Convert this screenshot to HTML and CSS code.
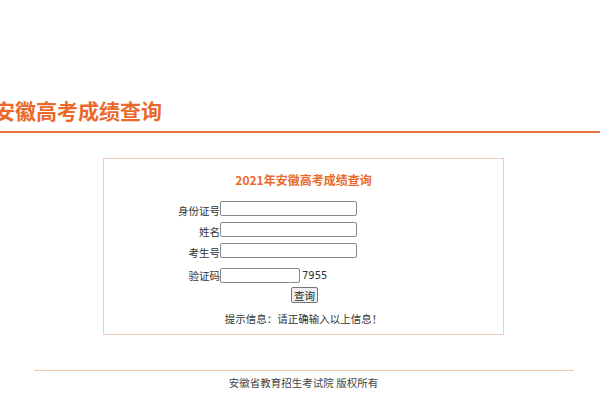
FILE: index.html
```html
<!DOCTYPE html>
<html lang="zh-CN">
<head>
<meta charset="utf-8">
<title>安徽高考成绩查询</title>
<link rel="stylesheet" href="styles.css">
</head>
<body>
<div class="header">
  <h1 class="site-title">安徽高考成绩查询</h1>
</div>
<div class="wrap">
  <div class="query-box">
    <h2 class="query-title">2021年安徽高考成绩查询</h2>
    <div class="form">
      <label class="lbl">身份证号</label>
      <div class="field"><input class="txt" type="text"></div>
      <label class="lbl">姓名</label>
      <div class="field"><input class="txt" type="text"></div>
      <label class="lbl">考生号</label>
      <div class="field"><input class="txt" type="text"></div>
      <label class="lbl lbl-code">验证码</label>
      <div class="field field-code"><input class="txt txt-code" type="text"><span class="code">7955</span></div>
    </div>
    <div class="actions"><button class="btn" type="button">查询</button></div>
    <p class="tips">提示信息：请正确输入以上信息！</p>
  </div>
  <div class="footer">
    <p class="copyright">安徽省教育招生考试院 版权所有</p>
  </div>
</div>
</body>
</html>
```

FILE: styles.css
```css
html, body {
  margin: 0;
  padding: 0;
  background: #ffffff;
  overflow: hidden;
}
body {
  width: 600px;
  font-family: "Noto Sans CJK SC", "Noto Sans", sans-serif;
  color: #333333;
  font-size: 10.5px;
}
.header {
  padding-top: 93px;
  padding-bottom: 4px;
  border-bottom: 2px solid #e8733a;
}
.site-title {
  margin: 0 0 0 -6px;
  font-size: 21px;
  line-height: 34px;
  font-weight: bold;
  color: #e96a2c;
}
.wrap {
  padding-left: 7px;
}
.query-box {
  width: 399px;
  margin: 25px auto 0;
  border: 1px solid #f0cdb8;
  padding: 13px 0 8px;
}
.query-title {
  margin: 0;
  text-align: center;
  font-size: 12px;
  line-height: 16px;
  font-weight: bold;
  color: #e96a2c;
}
.form {
  margin-top: 13px;
  display: grid;
  grid-template-columns: 116px 1fr;
  row-gap: 6px;
  align-items: end;
}
.lbl {
  text-align: right;
  line-height: 14px;
  margin-bottom: -2px;
  color: #333333;
}
.lbl-code {
  margin-top: 4px;
  margin-bottom: 0;
}
.field {
  display: flex;
  align-items: center;
}
.field-code {
  margin-top: 4px;
}
.txt {
  box-sizing: border-box;
  width: 137px;
  height: 15px;
  margin: 0;
  padding: 0 2px;
  border: 1px solid #8a8a8a;
  border-radius: 2px;
  background: #ffffff;
  font-size: 10px;
}
.txt-code {
  width: 80px;
}
.code {
  margin-left: 2px;
  font-family: "DejaVu Sans", sans-serif;
  font-size: 10px;
  line-height: 14px;
  color: #333333;
}
.actions {
  display: flex;
  justify-content: center;
  margin-top: 4px;
  padding-left: 2px;
}
.btn {
  box-sizing: border-box;
  height: 16px;
  padding: 0 2px;
  margin: 0;
  border: 1px solid #767676;
  border-radius: 2px;
  background: #efefef;
  font-family: "Noto Sans CJK SC", sans-serif;
  font-size: 10.5px;
  line-height: 13px;
  color: #222222;
}
.tips {
  margin: 9px 0 0;
  text-align: center;
  line-height: 14px;
  color: #333333;
}
.footer {
  width: 540px;
  margin: 35px auto 0;
  border-top: 1px solid #f1c7ab;
  padding-top: 5px;
}
.copyright {
  margin: 0;
  text-align: center;
  line-height: 14px;
  color: #444444;
}
```
